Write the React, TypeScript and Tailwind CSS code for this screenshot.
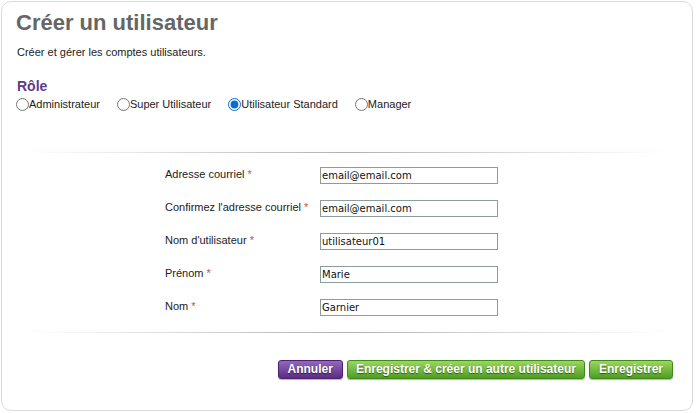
const ROLES = ["Administrateur", "Super Utilisateur", "Utilisateur Standard", "Manager"];

const FIELDS = [
  { label: "Adresse courriel", value: "email@email.com" },
  { label: "Confirmez l'adresse courriel", value: "email@email.com" },
  { label: "Nom d'utilisateur", value: "utilisateur01" },
  { label: "Prénom", value: "Marie" },
  { label: "Nom", value: "Garnier" },
];

function Separator() {
  return (
    <div className="mx-[29px] h-px bg-gradient-to-r from-transparent via-[#b0b0b0] to-transparent shadow-[0_-2px_3px_rgba(0,0,0,0.03)]" />
  );
}

export default function App() {
  return (
    <div className="w-[699px] h-[413px] bg-white pt-px pl-px font-['Liberation_Sans',Arial,sans-serif]">
      <div className="w-[692px] h-[410px] rounded-[10px] border border-[#d9d9d9] bg-white flex flex-col">
        <h1 className="mt-[8px] ml-[14px] text-[22px] leading-[25px] font-bold text-[#666666]">
          Créer un utilisateur
        </h1>
        <p className="mt-[11px] ml-[15px] text-[11px] leading-[13px] text-[#222]">
          Créer et gérer les comptes utilisateurs.
        </p>
        <h2 className="mt-[19px] ml-[15px] text-[14px] leading-[16px] font-bold text-[#5f3a87]">Rôle</h2>
        <div className="mt-[3px] ml-[14px] flex items-center gap-[17px] text-[11px] leading-[14px] text-[#222]">
          {ROLES.map((r) => (
            <label key={r} className="flex items-center">
              <input
                type="radio"
                name="role"
                defaultChecked={r === "Utilisateur Standard"}
                className="m-0 w-[13px] h-[13px] accent-[#0a6cd6]"
              />
              <span>{r}</span>
            </label>
          ))}
        </div>
        <div className="mt-[41px]">
          <Separator />
        </div>
        <div className="mt-[14px] ml-[163px] flex flex-col gap-[16px]">
          {FIELDS.map((f) => (
            <div key={f.label} className="flex items-start">
              <span className="w-[155px] pt-[1px] text-[11px] leading-[13px] text-[#222]">
                {f.label} <span className="text-[#c0504d]">*</span>
              </span>
              <input
                readOnly
                value={f.value}
                className="w-[178px] h-[17px] border border-[#8a9c9c] px-px text-[10px] leading-[15px] text-[#111] font-['DejaVu_Sans',Verdana,sans-serif] outline-none"
              />
            </div>
          ))}
        </div>
        <div className="mt-[16px]">
          <Separator />
        </div>
        <div className="mt-[27px] mr-[19px] flex justify-end gap-[4px]">
          <button className="h-[19px] px-[9px] rounded-[3px] border border-[#4a2270] bg-gradient-to-b from-[#9467bd] to-[#5b2d86] text-white text-[12px] leading-[17px] font-bold [text-shadow:0_1px_1px_rgba(0,0,0,0.6)] shadow-[0_1px_1px_rgba(0,0,0,0.3)]">
            Annuler
          </button>
          <button className="h-[19px] px-[8px] rounded-[3px] border border-[#3f8a1a] bg-gradient-to-b from-[#9ad75e] to-[#4f9e21] text-white text-[12px] leading-[17px] font-bold [text-shadow:0_1px_1px_rgba(0,0,0,0.5)] shadow-[0_1px_1px_rgba(0,0,0,0.3)]">
            Enregistrer &amp; créer un autre utilisateur
          </button>
          <button className="h-[19px] px-[9px] rounded-[3px] border border-[#3f8a1a] bg-gradient-to-b from-[#9ad75e] to-[#4f9e21] text-white text-[12px] leading-[17px] font-bold [text-shadow:0_1px_1px_rgba(0,0,0,0.5)] shadow-[0_1px_1px_rgba(0,0,0,0.3)]">
            Enregistrer
          </button>
        </div>
      </div>
    </div>
  );
}
